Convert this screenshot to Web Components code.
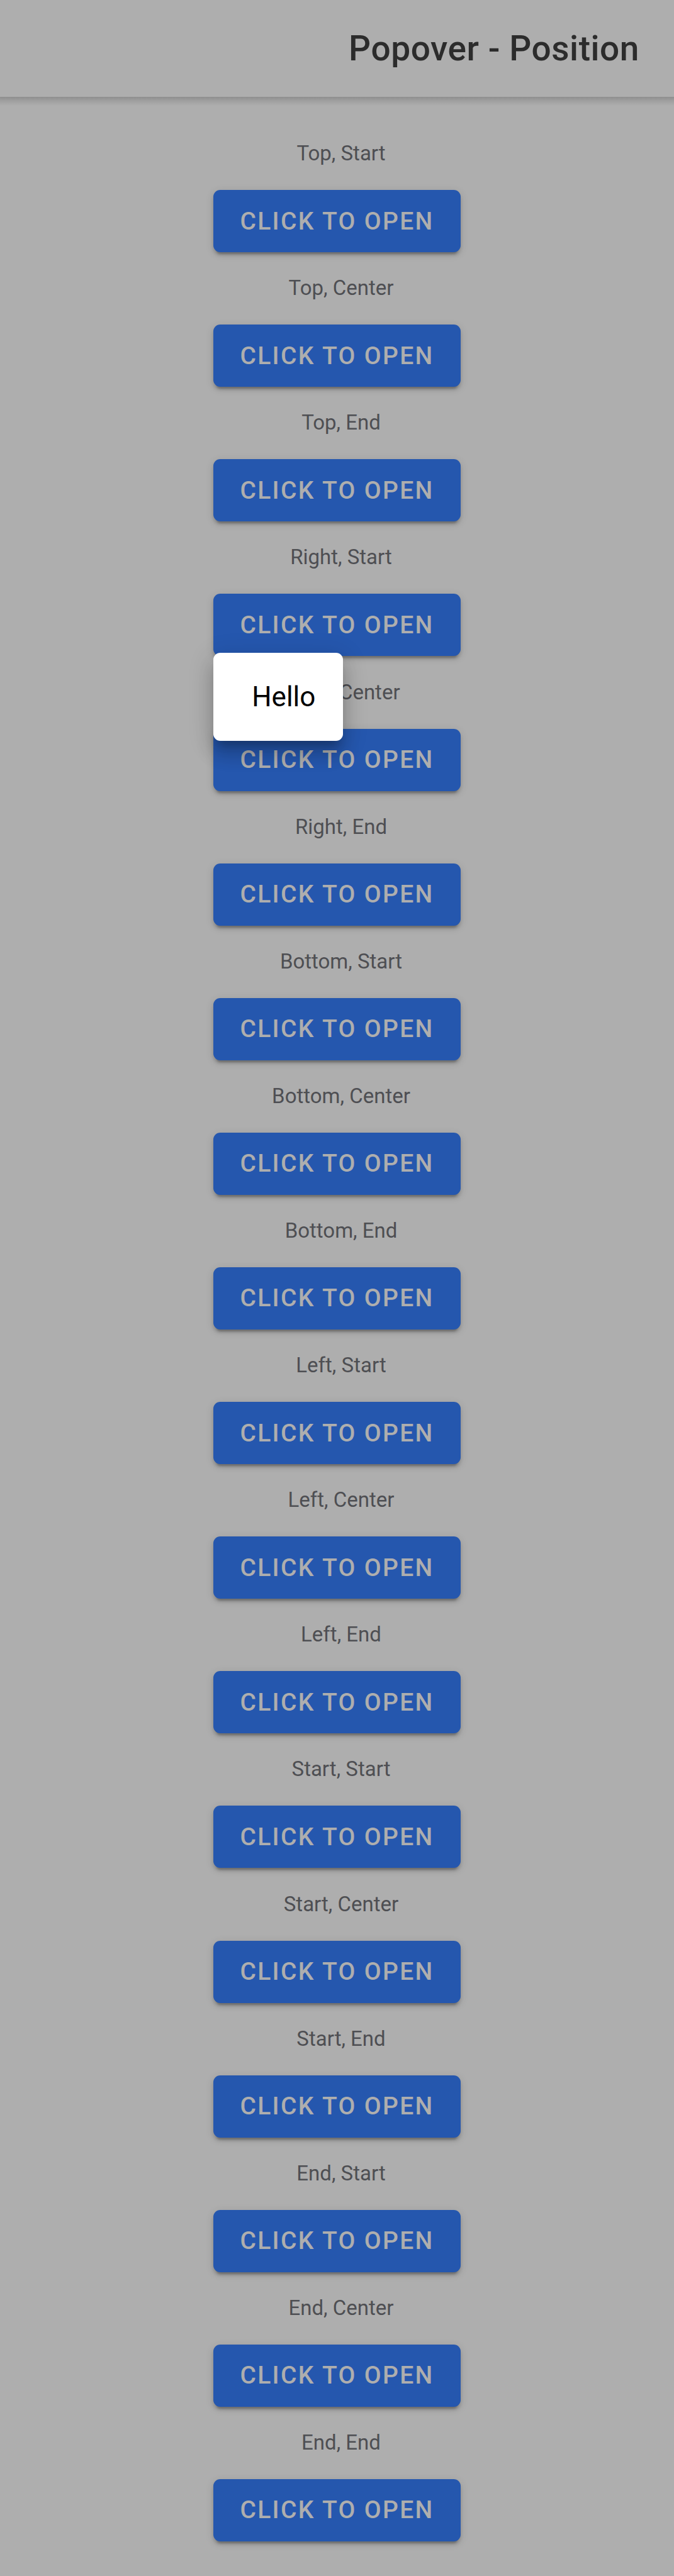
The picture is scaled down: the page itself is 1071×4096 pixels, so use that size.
<!DOCTYPE html>
<html lang="en">
<head>
<meta charset="utf-8">
<meta name="viewport" content="width=device-width, initial-scale=1">
<title>Popover - Position</title>
<style>
  body {
    margin: 0;
    font-family: Roboto, sans-serif;
    --surface: #aeaeae;
    --primary: #2557ae;
    --title: #2c2c2c;
    --label: #4e4f53;
    background: var(--surface);
  }
</style>
</head>
<body>
<demo-page>
  <app-toolbar slot="header">Popover - Position</app-toolbar>
  <popover-trigger label="Top, Start"></popover-trigger>
  <popover-trigger label="Top, Center"></popover-trigger>
  <popover-trigger label="Top, End"></popover-trigger>
  <popover-trigger label="Right, Start"></popover-trigger>
  <popover-trigger label="Right, Center"><pop-over>Hello</pop-over></popover-trigger>
  <popover-trigger label="Right, End"></popover-trigger>
  <popover-trigger label="Bottom, Start"></popover-trigger>
  <popover-trigger label="Bottom, Center"></popover-trigger>
  <popover-trigger label="Bottom, End"></popover-trigger>
  <popover-trigger label="Left, Start"></popover-trigger>
  <popover-trigger label="Left, Center"></popover-trigger>
  <popover-trigger label="Left, End"></popover-trigger>
  <popover-trigger label="Start, Start"></popover-trigger>
  <popover-trigger label="Start, Center"></popover-trigger>
  <popover-trigger label="Start, End"></popover-trigger>
  <popover-trigger label="End, Start"></popover-trigger>
  <popover-trigger label="End, Center"></popover-trigger>
  <popover-trigger label="End, End"></popover-trigger>
</demo-page>

<script>
  const define = (name, html, setup) => {
    const template = document.createElement('template');
    template.innerHTML = html;
    customElements.define(name, class extends HTMLElement {
      constructor() {
        super();
        this.attachShadow({ mode: 'open' }).append(template.content.cloneNode(true));
      }
      connectedCallback() {
        if (setup) setup(this);
      }
    });
  };

  define('demo-page', `
    <style>
      :host { display: flex; flex-direction: column; min-height: 100vh; }
      main { flex: 1; display: flex; flex-direction: column; padding: 44px; }
      main ::slotted(*) { flex: 1; }
    </style>
    <slot name="header"></slot>
    <main><slot></slot></main>`);

  define('app-toolbar', `
    <style>
      :host { display: block; }
      header { display: flex; align-items: center; justify-content: flex-end; height: 154px; padding: 0 55px; }
      h1 { margin: 0; font-size: 55px; font-weight: 500; line-height: 66px; color: var(--title); letter-spacing: 0.01em; }
      .shade { height: 14px; margin-bottom: -14px; background: linear-gradient(rgba(0,0,0,.18), rgba(0,0,0,.08) 50%, rgba(0,0,0,0)); }
    </style>
    <header><h1><slot></slot></h1></header>
    <div class="shade"></div>`);

  define('popover-trigger', `
    <style>
      :host { display: flex; flex-direction: column; align-items: center; justify-content: flex-end; }
      label { padding-left: 13px; margin-bottom: 38px; font-size: 33px; line-height: 40px; color: var(--label); }
      .anchor { position: relative; margin-bottom: 11px; }
      button {
        display: block; height: 99px; padding: 0 42px; border: 0; border-radius: 11px;
        background: var(--primary); color: var(--surface);
        font: 500 39px/46px Roboto, sans-serif; letter-spacing: 0.06em;
        box-shadow: 0 8px 3px -5px rgba(0,0,0,.2), 0 5px 5px 0 rgba(0,0,0,.14), 0 3px 14px 0 rgba(0,0,0,.12);
      }
    </style>
    <label for="open"></label>
    <div class="anchor">
      <button id="open" type="button">CLICK TO OPEN</button>
      <slot></slot>
    </div>`, el => {
      el.shadowRoot.querySelector('label').textContent = el.getAttribute('label');
    });

  define('pop-over', `
    <style>
      :host {
        position: absolute; left: 0; bottom: calc(100% - 19px); z-index: 1;
        display: flex; align-items: center; justify-content: flex-end;
        box-sizing: border-box; width: 206px; height: 140px; padding: 0 44px;
        border-radius: 11px; background: #fff; color: #000;
        font-size: 44px; line-height: 54px;
        box-shadow: 0 14px 14px -8px rgba(0,0,0,.2), 0 22px 27px 3px rgba(0,0,0,.14), 0 8px 38px 5px rgba(0,0,0,.12);
      }
    </style>
    <slot></slot>`);
</script>
</body>
</html>
